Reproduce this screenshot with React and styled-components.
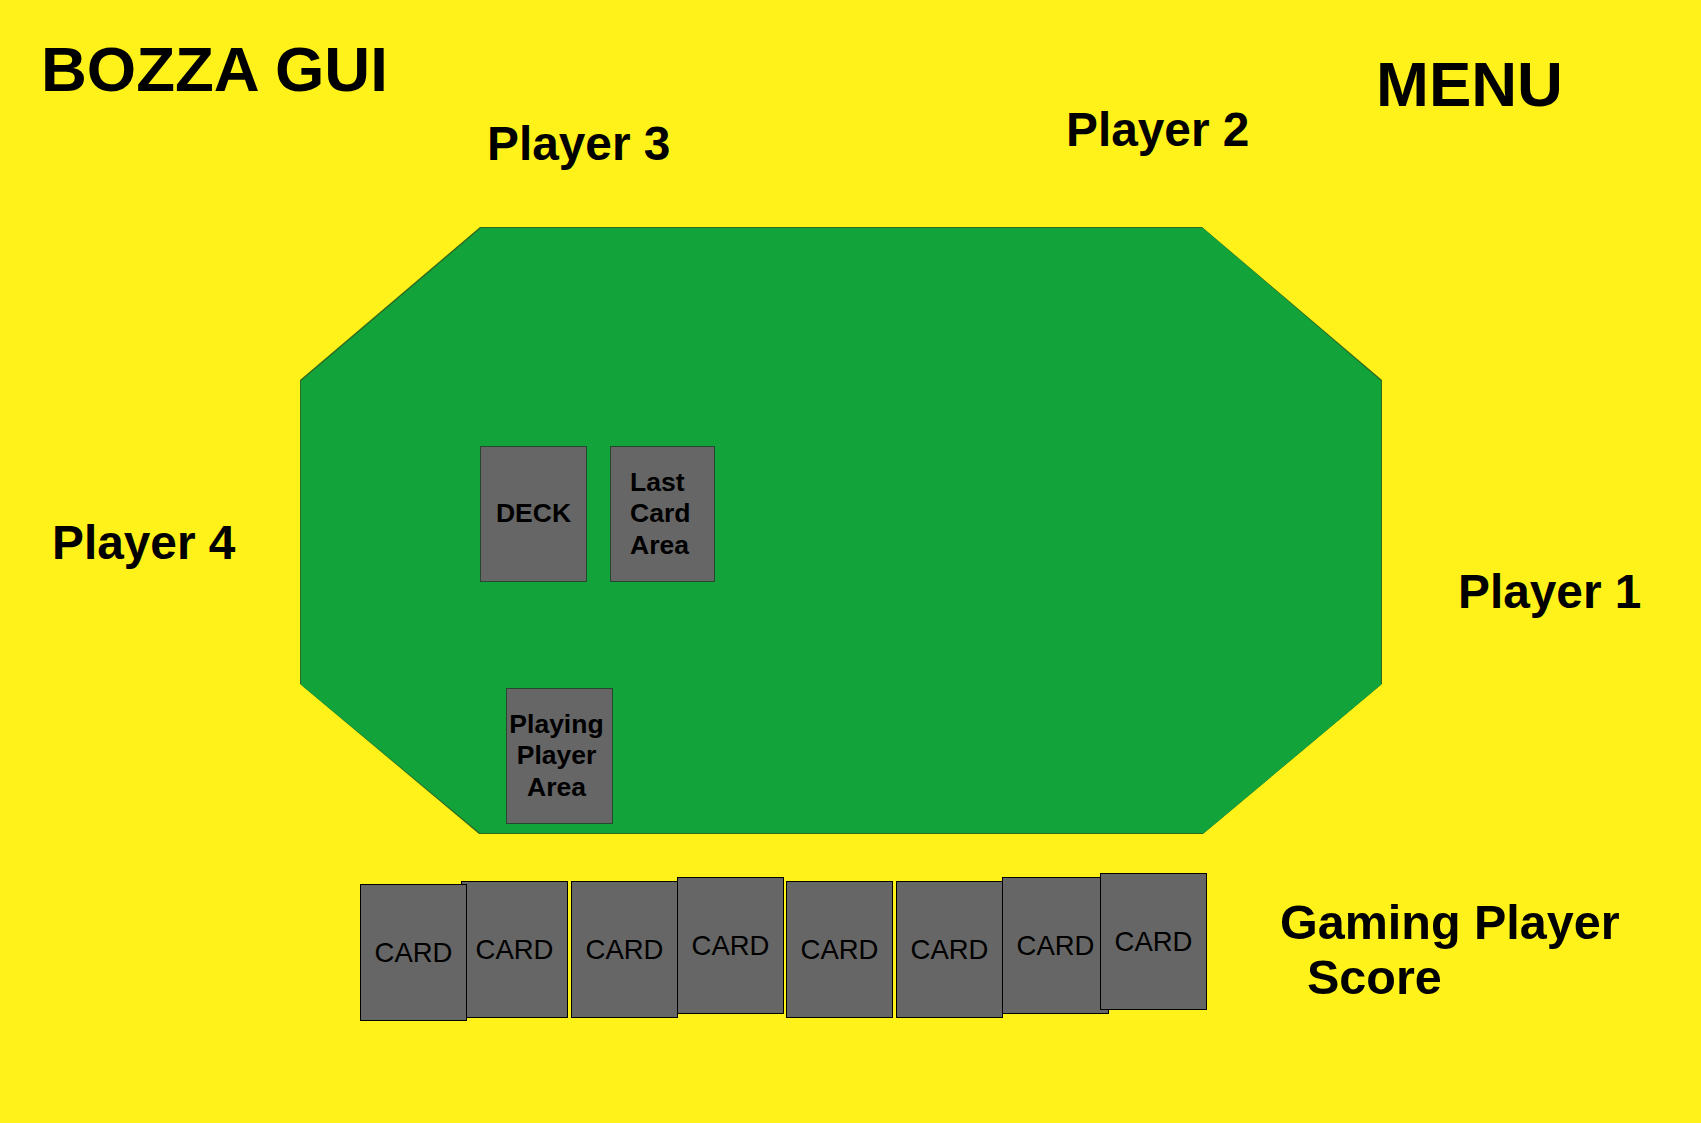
import styled, { createGlobalStyle } from "styled-components";

const GlobalStyle = createGlobalStyle`
  html, body {
    margin: 0;
    padding: 0;
  }
  body {
    font-family: "Liberation Sans", Arial, sans-serif;
    color: #000;
  }
`;

const Page = styled.div`
  width: 1701px;
  height: 1123px;
  background: #fff21b;
  overflow: hidden;
  display: grid;
  grid-template-rows: 227px 607px 1fr;
`;

const TopBar = styled.div`
  display: grid;
  grid-template-columns: 487px 579px 310px 1fr;
  align-items: start;
`;

const Title = styled.h1`
  margin: ${(p) => p.$top}px 0 0 ${(p) => p.$left || 0}px;
  font-size: 63.5px;
  line-height: 1;
  font-weight: 700;
  white-space: nowrap;
`;

const Seat = styled.div`
  margin: ${(p) => p.$top}px 0 0 ${(p) => p.$left || 0}px;
  font-size: 47.8px;
  line-height: 1;
  font-weight: 700;
  white-space: nowrap;
`;

const Middle = styled.div`
  display: grid;
  grid-template-columns: 300px 1082px 1fr;
  align-items: start;
`;

const tableShape = `polygon(180px 0, 902px 0, 100% 153px, 100% 457px, 903px 100%, 179px 100%, 0 457px, 0 153px)`;

const TableEdge = styled.div`
  height: 607px;
  background: #2f6a1f;
  clip-path: ${tableShape};
  padding: 1px;
  box-sizing: border-box;
`;

const TableFelt = styled.div`
  height: 100%;
  background: #12a33a;
  clip-path: ${tableShape};
  box-sizing: border-box;
  padding: 218px 0 0 179px;
  display: flex;
  flex-direction: column;
  align-items: flex-start;
  gap: 106px;
`;

const PileRow = styled.div`
  display: flex;
  gap: 23px;
`;

const Slot = styled.div`
  width: ${(p) => p.$w}px;
  height: 136px;
  margin-left: ${(p) => p.$left || 0}px;
  box-sizing: border-box;
  background: #666666;
  border: 1px solid #24472e;
  display: flex;
  flex-direction: column;
  justify-content: center;
  align-items: ${(p) => (p.$align === "left" ? "flex-start" : "center")};
  padding-left: ${(p) => (p.$align === "left" ? 19 : 0)}px;
  padding-right: ${(p) => p.$shift || 0}px;
  font-size: 26.5px;
  line-height: 31.5px;
  font-weight: 700;
  text-align: center;
  white-space: nowrap;
`;

const Bottom = styled.div`
  display: grid;
  grid-template-columns: 1280px 1fr;
  align-items: start;
`;

const Hand = styled.div`
  display: flex;
  align-items: flex-start;
  padding-left: 360px;
`;

const Card = styled.div`
  position: relative;
  z-index: ${(p) => p.$z || 0};
  width: 107px;
  height: 137px;
  flex: none;
  box-sizing: border-box;
  margin-top: ${(p) => p.$top}px;
  margin-left: ${(p) => p.$left}px;
  background: #666666;
  border: 1px solid #000;
  display: flex;
  align-items: center;
  justify-content: center;
  font-size: 27.5px;
  font-weight: 400;
`;

const Score = styled.div`
  margin-top: 61px;
  font-size: 48.5px;
  line-height: 55px;
  font-weight: 700;
  white-space: nowrap;
`;

const ScoreIndent = styled.span`
  display: block;
  padding-left: 27px;
`;

const hand = [
  { top: 50, left: 0, z: 1 },
  { top: 47, left: -6 },
  { top: 47, left: 3 },
  { top: 43, left: -1 },
  { top: 47, left: 2 },
  { top: 47, left: 3 },
  { top: 43, left: -1 },
  { top: 39, left: -9, z: 1 },
];

export default function App() {
  return (
    <Page>
      <GlobalStyle />
      <TopBar>
        <Title $top={38} $left={41}>BOZZA GUI</Title>
        <Seat $top={120}>Player 3</Seat>
        <Seat $top={106}>Player 2</Seat>
        <Title $top={53}>MENU</Title>
      </TopBar>
      <Middle>
        <Seat $top={292} $left={52}>Player 4</Seat>
        <TableEdge>
          <TableFelt>
            <PileRow>
              <Slot $w={107}>DECK</Slot>
              <Slot $w={105} $align="left">
                <span>Last</span>
                <span>Card</span>
                <span>Area</span>
              </Slot>
            </PileRow>
            <Slot $w={107} $left={26} $shift={6}>
              <span>Playing</span>
              <span>Player</span>
              <span>Area</span>
            </Slot>
          </TableFelt>
        </TableEdge>
        <Seat $top={341} $left={76}>Player 1</Seat>
      </Middle>
      <Bottom>
        <Hand>
          {hand.map((c, i) => (
            <Card key={i} $top={c.top} $left={c.left} $z={c.z}>
              CARD
            </Card>
          ))}
        </Hand>
        <Score>
          Gaming Player
          <ScoreIndent>Score</ScoreIndent>
        </Score>
      </Bottom>
    </Page>
  );
}
